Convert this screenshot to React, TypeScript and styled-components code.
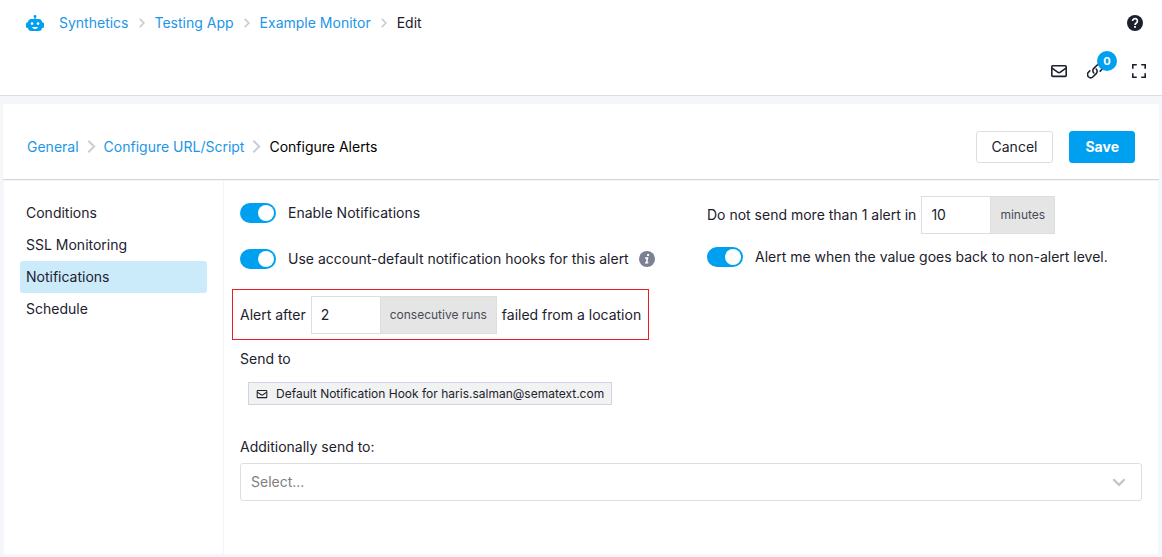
import React, { useState } from "react";
import styled, { createGlobalStyle, css } from "styled-components";

const Global = createGlobalStyle`
  * { box-sizing: border-box; }
  html, body, #root { height: 100%; }
  body {
    margin: 0;
    background: #f5f6f9;
    color: #1d212d;
    font-family: Inter, "Liberation Sans", sans-serif;
    font-size: 14px;
    line-height: 20px;
  }
  button, input, select { font: inherit; color: inherit; }
  a { color: #1c96e8; text-decoration: none; }
`;

const Page = styled.div`
  min-height: 100%;
  display: flex;
  flex-direction: column;
`;

const TopBar = styled.header`
  background: #fff;
  border-bottom: 1px solid #dcdee2;
  display: flex;
  flex-direction: column;
  gap: 24px;
  padding: 11px 11px 12px 26px;
`;

const BarRow = styled.div<{ $tools?: boolean }>`
  display: flex;
  align-items: center;
  justify-content: ${(p) => (p.$tools ? "flex-end" : "space-between")};
  gap: 16px;
  height: 24px;
  padding-right: ${(p) => (p.$tools ? 0 : 4)}px;
`;

const Crumbs = styled.nav<{ $gap: number }>`
  display: flex;
  align-items: center;
  gap: ${(p) => p.$gap}px;
`;

const Home = styled.a`
  display: flex;
  margin-right: 8px;
  color: #00a0f0;
`;

const Current = styled.span<{ $dark?: boolean }>`
  color: ${(p) => (p.$dark ? "#000" : "#1d212d")};
`;

const IconButton = styled.button<{ $badged?: boolean }>`
  position: relative;
  display: flex;
  align-items: center;
  justify-content: ${(p) => (p.$badged ? "flex-start" : "center")};
  width: 24px;
  height: 24px;
  padding: 0;
  border: 0;
  background: none;
  color: #1d212d;
`;

const Badge = styled.span`
  position: absolute;
  left: 10px;
  top: -8px;
  width: 20px;
  height: 20px;
  border-radius: 10px;
  background: #00a0f0;
  color: #fff;
  font-size: 11px;
  font-weight: 700;
`;

const Panel = styled.main`
  flex: 1;
  display: flex;
  flex-direction: column;
  margin: 8px 3px 3px;
  background: #fff;
`;

const PanelHead = styled.div`
  display: flex;
  align-items: center;
  justify-content: space-between;
  height: 76px;
  padding: 10px 24px 0;
  border-bottom: 1px solid #d3d5d9;
`;

const Actions = styled.div`
  display: flex;
  gap: 16px;
`;

const Button = styled.button<{ $primary?: boolean }>`
  height: 32px;
  padding: 0 15px;
  border: 1px solid #dcdee4;
  border-radius: 3px;
  background: #fff;
  ${(p) =>
    p.$primary &&
    css`
      border-color: #00a0f0;
      background: #00a0f0;
      color: #fff;
      font-weight: 700;
    `}
`;

const Body = styled.div`
  flex: 1;
  display: flex;
  border: 1px solid #f5f6f9;
  border-bottom: 0;
`;

const Side = styled.nav`
  flex: none;
  width: 220px;
  padding: 16px;
  border-right: 1px solid #f3f4f6;
`;

const SideLink = styled.a<{ $active?: boolean }>`
  display: block;
  padding: 6px;
  border-radius: 3px;
  color: #1d212d;
  background: ${(p) => (p.$active ? "#cbebfb" : "transparent")};
`;

const Content = styled.form`
  flex: 1;
  min-width: 0;
  padding: 15px 16px 16px;
`;

const Columns = styled.div`
  display: grid;
  grid-template-columns: 467px 1fr;
  align-items: start;
`;

const LeftCol = styled.div`
  display: flex;
  flex-direction: column;
  align-items: flex-start;
  gap: 12px;
`;

const RightCol = styled.div`
  display: flex;
  flex-direction: column;
  align-items: flex-start;
  gap: 6px;
`;

const ToggleRow = styled.div`
  display: flex;
  align-items: center;
  gap: 10px;
  height: 34px;
`;

const ToggleLabel = styled.label`
  display: flex;
  align-items: center;
  gap: 12px;
`;

const Switch = styled.input`
  appearance: none;
  display: flex;
  width: 36px;
  height: 20px;
  margin: 0;
  padding: 2px;
  border-radius: 10px;
  background: #b9bec9;

  &::before {
    content: "";
    width: 16px;
    height: 16px;
    border-radius: 8px;
    background: #fff;
  }
  &:checked {
    justify-content: flex-end;
    background: #00a0f0;
  }
`;

const Field = styled.div`
  display: flex;
  align-items: center;
  gap: 5px;
`;

const Highlight = styled(Field)`
  height: 51px;
  margin: 1px 0 0 -8px;
  padding: 0 7px;
  border: 1px solid #ed1c24;
`;

const Group = styled.span`
  display: flex;
  height: 38px;
  border: 1px solid #dcdee4;
`;

const NumberInput = styled.input`
  width: 68px;
  padding: 0 9px;
  border: 0;
  background: #fff;
`;

const Addon = styled.span`
  display: flex;
  align-items: center;
  padding: 0 9px;
  border-left: 1px solid #dcdee4;
  background: #e5e5e5;
  color: #474b57;
  font-size: 12px;
`;

const Hook = styled.div`
  display: flex;
  align-items: center;
  gap: 8px;
  width: fit-content;
  height: 23px;
  margin: 13px 0 32px 8px;
  padding: 0 7px;
  border: 1px solid #d0d3e6;
  background: #f1f2f2;
  font-size: 12px;
`;

const Caption = styled.div`
  margin-top: 9px;
`;

const SelectLabel = styled.label`
  display: block;
  margin-bottom: 6px;
`;

const SelectWrap = styled.div`
  display: grid;
  align-items: center;

  > * { grid-area: 1 / 1; }
  > svg { justify-self: end; margin-right: 14px; pointer-events: none; }
`;

const Select = styled.select`
  appearance: none;
  width: 100%;
  height: 38px;
  padding: 0 10px;
  border: 1px solid #dcdee0;
  border-radius: 3px;
  background: #fff;
  color: #808080;
`;

const Mail = ({ size }: { size: number }) => (
  <svg width={size} height={size} viewBox="0 0 18 18" fill="none" stroke="currentColor" strokeWidth="1.6" aria-hidden="true">
    <rect x="1.8" y="3.8" width="14.4" height="10.6" rx="1" />
    <path d="M2 6.2l5.600 4q1.400 1 2.800 0L16 6.200" />
  </svg>
);

const Robot = () => (
  <svg width="18" height="16" viewBox="0 0 18 16" fill="currentColor" aria-hidden="true">
    <circle cx="9" cy="1.400" r="1.400" />
    <rect x="8.300" y="2" width="1.400" height="3" />
    <rect x="2" y="4" width="14" height="12" rx="3.500" />
    <rect x="0" y="7.300" width="18" height="5.700" rx="1.500" />
    <circle cx="6" cy="8.600" r="1.300" fill="#fff" />
    <circle cx="12" cy="8.600" r="1.300" fill="#fff" />
    <path d="M6 12h6c-.5 1.300-1.600 1.900-3 1.900S6.500 13.300 6 12z" fill="#fff" />
  </svg>
);

const Chevron = ({ size, color, down }: { size: number; color: string; down?: boolean }) => (
  <svg width={size} height={size} viewBox="0 0 16 16" fill="none" stroke={color} strokeWidth="2" aria-hidden="true">
    <path d={down ? "M3 5.500l5 5 5-5" : "M5 2.500L10.500 8 5 13.500"} />
  </svg>
);

function Toggle({ label, children }: { label: string; children?: React.ReactNode }) {
  const [on, setOn] = useState(true);
  return (
    <ToggleRow>
      <ToggleLabel>
        <Switch type="checkbox" role="switch" checked={on} onChange={() => setOn(!on)} />
        {label}
      </ToggleLabel>
      {children}
    </ToggleRow>
  );
}

const sections = ["Conditions", "SSL Monitoring", "Notifications", "Schedule"];

export default function App() {
  return (
    <>
      <Global />
      <Page>
        <TopBar>
          <BarRow>
            <Crumbs $gap={7} aria-label="Breadcrumb">
              <Home href="#home" aria-label="Home"><Robot /></Home>
              <a href="#synthetics">Synthetics</a>
              <Chevron size={12} color="#c5c9d0" />
              <a href="#app">Testing App</a>
              <Chevron size={12} color="#c5c9d0" />
              <a href="#monitor">Example Monitor</a>
              <Chevron size={12} color="#c5c9d0" />
              <Current>Edit</Current>
            </Crumbs>
            <IconButton aria-label="Help">
              <svg width="18" height="18" viewBox="0 0 18 18" aria-hidden="true">
                <circle cx="9" cy="9" r="8" fill="#1d212d" />
                <path d="M6.600 7a2.400 2.400 0 1 1 3.700 2C9.400 9.600 9 10 9 11" fill="none" stroke="#fff" strokeWidth="1.700" />
                <rect x="8.100" y="12" width="1.800" height="1.800" fill="#fff" />
              </svg>
            </IconButton>
          </BarRow>
          <BarRow $tools>
            <IconButton aria-label="Email"><Mail size={18} /></IconButton>
            <IconButton $badged aria-label="Links">
              <svg width="16" height="16" viewBox="2 2 20 20" fill="none" stroke="currentColor" strokeWidth="2" strokeLinecap="round" aria-hidden="true">
                <path d="M10.500 14.500a4 4 0 0 1 0-5.700l4-4a4 4 0 0 1 5.700 5.700l-1.700 1.700" />
                <path d="M13.500 9.500a4 4 0 0 1 0 5.700l-4 4a4 4 0 0 1-5.700-5.700l1.700-1.700" />
              </svg>
              <Badge>0</Badge>
            </IconButton>
            <IconButton aria-label="Fullscreen">
              <svg width="16" height="16" viewBox="0 0 16 16" fill="none" stroke="currentColor" strokeWidth="1.600" aria-hidden="true">
                <path d="M1.800 5.800v-4h4M10.200 1.800h4v4M14.200 10.200v4h-4M5.800 14.200h-4v-4" />
              </svg>
            </IconButton>
          </BarRow>
        </TopBar>

        <Panel>
          <PanelHead>
            <Crumbs $gap={4} aria-label="Steps">
              <a href="#general">General</a>
              <Chevron size={17} color="#cbced4" />
              <a href="#script">Configure URL/Script</a>
              <Chevron size={17} color="#cbced4" />
              <Current $dark>Configure Alerts</Current>
            </Crumbs>
            <Actions>
              <Button>Cancel</Button>
              <Button $primary>Save</Button>
            </Actions>
          </PanelHead>

          <Body>
            <Side aria-label="Alert settings">
              {sections.map((s) => (
                <SideLink key={s} href={"#" + s} $active={s === "Notifications"}>{s}</SideLink>
              ))}
            </Side>
            <Content>
              <Columns>
                <LeftCol>
                  <Toggle label="Enable Notifications" />
                  <Toggle label="Use account-default notification hooks for this alert">
                    <svg width="16" height="16" viewBox="0 0 16 16" aria-hidden="true">
                      <circle cx="8" cy="8" r="8" fill="#7a8194" />
                      <path d="M8.300 3h2l-.4 2h-2zM6.200 6.300h3.200l-1 4.900h1.100l-.3 1.400H5.800l.3-1.400h.7l.7-3.500H5.900z" fill="#fff" />
                    </svg>
                  </Toggle>
                  <Highlight>
                    <label htmlFor="runs">Alert after</label>
                    <Group>
                      <NumberInput id="runs" defaultValue="2" />
                      <Addon>consecutive runs</Addon>
                    </Group>
                    <span>failed from a location</span>
                  </Highlight>
                </LeftCol>
                <RightCol>
                  <Field>
                    <label htmlFor="limit">Do not send more than 1 alert in</label>
                    <Group>
                      <NumberInput id="limit" defaultValue="10" />
                      <Addon>minutes</Addon>
                    </Group>
                  </Field>
                  <Toggle label="Alert me when the value goes back to non-alert level." />
                </RightCol>
              </Columns>
              <Caption>Send to</Caption>
              <Hook><Mail size={12} />Default Notification Hook for haris.salman@sematext.com</Hook>
              <SelectLabel htmlFor="extra">Additionally send to:</SelectLabel>
              <SelectWrap>
                <Select id="extra"><option>Select...</option></Select>
                <Chevron size={18} color="#c4c4c4" down />
              </SelectWrap>
            </Content>
          </Body>
        </Panel>
      </Page>
    </>
  );
}
